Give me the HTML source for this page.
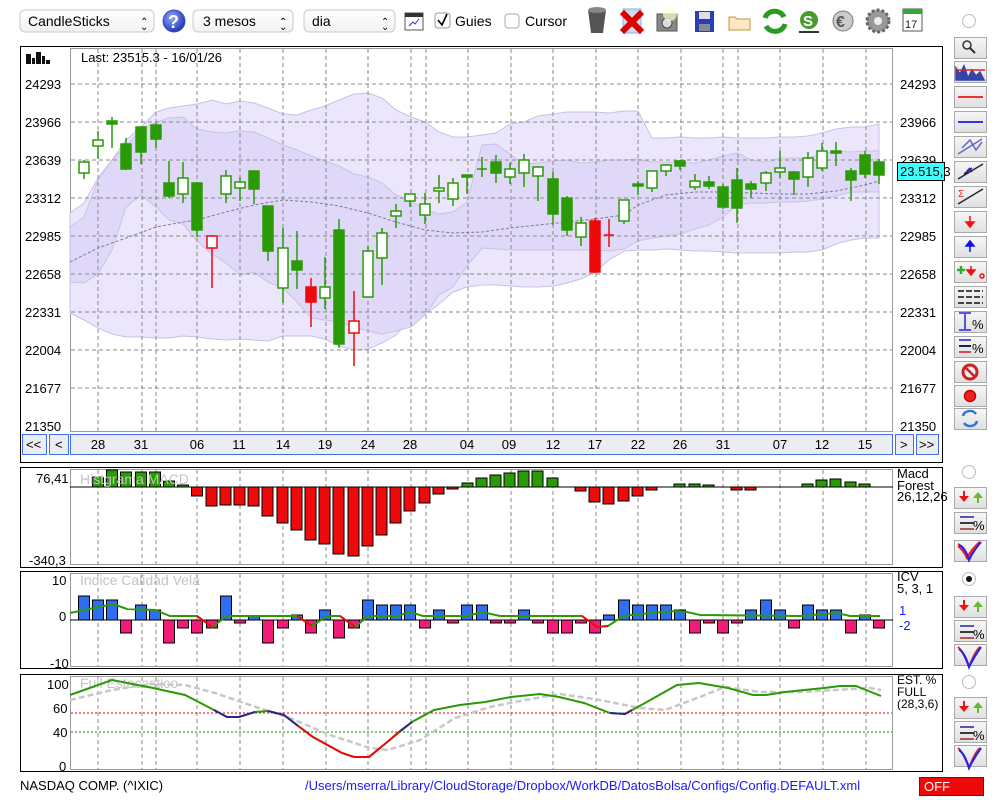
<!DOCTYPE html>
<html><head><meta charset="utf-8"><style>
body{margin:0;width:1000px;height:800px;background:#fff;overflow:hidden;font-family:"Liberation Sans",sans-serif;}
svg{position:absolute;left:0;top:0}
text{font-family:"Liberation Sans",sans-serif;}
</style></head><body>
<svg width="1000" height="800" viewBox="0 0 1000 800" xmlns="http://www.w3.org/2000/svg">
<defs>
<linearGradient id="sel" x1="0" y1="0" x2="0" y2="1"><stop offset="0" stop-color="#fff"/><stop offset="1" stop-color="#f2f2f2"/></linearGradient>
<linearGradient id="btn" x1="0" y1="0" x2="0" y2="1"><stop offset="0" stop-color="#f6f6f6"/><stop offset="1" stop-color="#e0e0e0"/></linearGradient>
<radialGradient id="help" cx="0.4" cy="0.35" r="0.7"><stop offset="0" stop-color="#8fa8ff"/><stop offset="1" stop-color="#1b2fb0"/></radialGradient>
</defs>

<!-- toolbar -->
<g font-size="14" fill="#000">
<rect x="20" y="10" width="134" height="22" rx="5" fill="url(#sel)" stroke="#c9c9c9"/>
<text x="28" y="26">CandleSticks</text>
<text x="140" y="25" font-size="10">⌃</text><text x="140" y="30" font-size="10">⌄</text>
<circle cx="174" cy="21" r="11" fill="url(#help)" stroke="#3a4fc0"/>
<text x="168" y="28" font-size="18" font-weight="bold" fill="#fff">?</text>
<rect x="193" y="10" width="100" height="22" rx="5" fill="url(#sel)" stroke="#c9c9c9"/>
<text x="203" y="26">3 mesos</text>
<text x="279" y="25" font-size="10">⌃</text><text x="279" y="30" font-size="10">⌄</text>
<rect x="304" y="10" width="91" height="22" rx="5" fill="url(#sel)" stroke="#c9c9c9"/>
<text x="312" y="26">dia</text>
<text x="381" y="25" font-size="10">⌃</text><text x="381" y="30" font-size="10">⌄</text>
<rect x="405" y="13" width="18" height="17" fill="#fff" stroke="#555"/><rect x="405" y="13" width="18" height="4" fill="#333"/>
<path d="M409 26 L413 22 L415 24 L419 19" stroke="#33c" fill="none"/>
<rect x="435" y="13" width="15" height="15" rx="3" fill="#fff" stroke="#999"/>
<path d="M438 20 L442 25 L447 14" stroke="#000" stroke-width="1.6" fill="none"/>
<text x="455" y="26">Guies</text>
<rect x="505" y="14" width="14" height="14" rx="3" fill="#fff" stroke="#aaa"/>
<text x="525" y="26">Cursor</text>
</g>
<!-- toolbar icons -->
<g>
<path d="M588 10 L606 10 L603 33 L591 33 Z" fill="#555"/><ellipse cx="597" cy="10" rx="9" ry="3" fill="#888"/>
<rect x="623" y="9" width="18" height="24" fill="#cde" stroke="#8ae"/>
<path d="M622 12 L642 32 M642 12 L622 32" stroke="#d00" stroke-width="6"/>
<rect x="657" y="14" width="20" height="17" fill="#888" stroke="#555"/><circle cx="667" cy="23" r="5" fill="#ddd" stroke="#444"/><circle cx="670" cy="14" r="7" fill="#ffffcc" opacity="0.7"/>
<rect x="695" y="11" width="19" height="21" fill="#2a3fb0"/><rect x="699" y="12" width="11" height="7" fill="#dde"/><rect x="699" y="24" width="11" height="7" fill="#889"/>
<path d="M729 17 L735 17 L737 19 L750 19 L750 30 L729 30 Z" fill="#fbe7c0" stroke="#c89040"/>
<path d="M765 18 A10 9 0 0 1 784 17 M785 24 A10 9 0 0 1 766 26" stroke="#2a9a20" stroke-width="5" fill="none"/>
<circle cx="809" cy="20" r="9" fill="#4a9a30"/><text x="803" y="26" font-size="15" font-weight="bold" fill="#fff">S</text><rect x="799" y="31" width="20" height="2" fill="#333"/>
<circle cx="843" cy="21" r="10" fill="#ccc" stroke="#777"/><text x="836" y="27" font-size="16" font-weight="bold" fill="#555">€</text>
<circle cx="878" cy="21" r="11" fill="#999" stroke="#666" stroke-width="3" stroke-dasharray="3 2"/><circle cx="878" cy="21" r="4" fill="#eee"/>
<rect x="903" y="9" width="19" height="22" fill="#fff" stroke="#555"/><rect x="903" y="9" width="19" height="5" fill="#3a3"/><text x="905" y="28" font-size="11" fill="#222">17</text>
<circle cx="969" cy="21" r="6.5" fill="#fff" stroke="#bbb"/>
</g>

<!-- MAIN PANEL -->
<rect x="20.5" y="46.5" width="922" height="416" fill="#fff" stroke="#000"/>
<g fill="#111"><rect x="26" y="54" width="5" height="10"/><rect x="32" y="58" width="3" height="6"/><rect x="36" y="52" width="5" height="12"/><rect x="42" y="56" width="3" height="8"/><rect x="46" y="60" width="4" height="4"/></g>
<text x="81" y="62" font-size="13">Last: 23515.3 - 16/01/26</text>
<rect x="70.5" y="48.5" width="822" height="383" fill="none" stroke="#999"/>
<!-- bands -->
<polygon fill="#ebe6fc" stroke="#c8c0e6" points="70,213 84,203 98,178 112,160 126,140 141,127 156,112 169,108 183,106 197,104 212,100 226,104 240,101 254,103 268,108 283,114 297,115 311,110 325,106 339,100 354,94 368,93 382,98 396,110 411,117 425,122 439,132 453,137 467,137 482,135 496,133 510,124 524,122 538,116 553,114 567,112 581,112 595,112 609,113 624,111 638,111 652,138 666,138 680,137 695,138 709,138 723,137 737,138 751,138 766,138 780,137 794,137 808,136 822,133 836,129 851,127 865,127 879,124 879,238 865,238 851,240 836,244 822,250 808,252 794,252 780,253 766,253 751,253 737,253 723,252 709,251 695,251 680,250 666,249 652,250 638,250 624,251 609,260 595,272 581,279 567,283 553,286 538,287 524,287 510,286 496,285 482,285 467,287 453,292 439,304 425,314 411,319 396,335 382,343 368,349 354,350 339,346 325,339 311,336 297,336 283,336 268,341 254,340 240,339 226,340 212,339 197,337 183,336 169,338 156,338 141,337 126,337 112,334 98,328 84,320 70,313"/>
<polygon fill="#ded6f8" stroke="#c4bce4" opacity="0.85" points="70,227 84,217 98,180 112,160 126,146 141,130 156,122 169,118 183,117 197,129 212,132 226,133 240,131 254,132 268,138 283,145 297,150 311,156 325,161 339,166 354,174 368,177 382,183 396,195 411,201 425,210 439,214 453,212 467,202 482,145 496,144 510,154 524,164 538,163 553,161 567,160 581,163 595,162 609,160 624,160 638,159 652,162 666,162 680,163 695,163 709,160 723,156 737,153 751,160 766,162 780,158 794,158 808,158 822,154 836,151 851,152 865,151 879,151 879,192 865,192 851,192 836,196 822,199 808,201 794,202 780,202 766,203 751,203 737,205 723,217 709,225 695,229 680,234 666,236 652,238 638,241 624,249 609,251 595,250 567,250 538,250 510,250 482,248 467,266 453,287 439,295 425,315 411,327 396,331 382,334 368,331 354,327 339,322 325,320 311,318 297,302 283,288 268,282 254,272 240,275 226,263 212,254 197,241 183,224 169,220 156,207 141,195 126,207 112,250 98,274 84,283 70,282"/>
<polyline fill="none" stroke="#7f7898" stroke-dasharray="3 2" points="70,262 98,248 126,238 156,227 183,222 197,220 226,212 254,205 283,200 311,202 339,206 368,213 396,222 425,230 453,233 482,232 510,228 538,225 567,222 595,219 624,215 638,205 666,195 695,192 723,192 751,193 780,194 808,194 836,191 865,185 879,181"/>
<!-- grid -->
<g stroke="#888" stroke-dasharray="4 3" stroke-width="1">
<path d="M71 84H892M71 122H892M71 160H892M71 198H892M71 236H892M71 274H892M71 312H892M71 350H892M71 388H892"/>
<path d="M98 49V431M142 49V431M156 49V431M197 49V431M240 49V431M283 49V431M326 49V431M368 49V431M411 49V431M426 49V431M468 49V431M511 49V431M553 49V431M596 49V431M638 49V431M681 49V431M723 49V431M738 49V431M780 49V431M823 49V431M866 49V431"/>
</g>
<g font-size="13" fill="#000">
<text x="25" y="89">24293</text><text x="25" y="127">23966</text><text x="25" y="165">23639</text><text x="25" y="203">23312</text><text x="25" y="241">22985</text><text x="25" y="279">22658</text><text x="25" y="317">22331</text><text x="25" y="355">22004</text><text x="25" y="393">21677</text><text x="25" y="431">21350</text>
<text x="900" y="89">24293</text><text x="900" y="127">23966</text><text x="900" y="165">23639</text><text x="900" y="203">23312</text><text x="900" y="241">22985</text><text x="900" y="279">22658</text><text x="900" y="317">22331</text><text x="900" y="355">22004</text><text x="900" y="393">21677</text><text x="900" y="431">21350</text>
</g>
<rect x="897.5" y="162.5" width="47" height="18" fill="#40ffff" stroke="#000"/>
<text x="900" y="176" font-size="13">23.515,3</text>

<!-- candles -->
<g stroke="#2a9a06" stroke-width="1.5" fill="#2a9a06">
<path d="M84 160V179M98 131V159M112 117V148M126 138V170M141 127V164M156 123V148M169 161V198M183 162V203M197 182V237M226 170V203M240 177V201M254 171V204M268 206V261M283 228V303M297 231V289M325 257V309M339 219V348M368 246V297M382 228V285M396 204V228M410 194V207M425 193V224M439 175V203M453 178V206M467 175V194M482 157V177M496 155V183M510 163V184M524 154V187M538 166V201M553 172V225M567 196V236M581 217V246M624 200V224M638 181V195M652 171V192M666 164V176M680 160V170M695 174V190M709 176V189M723 184V209M737 168V223M751 181V198M766 171V191M780 151V178M794 171V195M808 152V187M822 143V171M836 142V166M851 168V201M865 151V178M879 159V184M477 169H487"/>
<rect x="107" y="121" width="10" height="3"/><rect x="121" y="144" width="10" height="25"/><rect x="136" y="127" width="10" height="25"/><rect x="151" y="125" width="10" height="14"/><rect x="164" y="183" width="10" height="13"/><rect x="192" y="183" width="10" height="47"/><rect x="249" y="171" width="10" height="18"/><rect x="263" y="206" width="10" height="45"/><rect x="292" y="261" width="10" height="9"/><rect x="334" y="230" width="10" height="114"/><rect x="462" y="175" width="10" height="2"/><rect x="491" y="162" width="10" height="11"/><rect x="548" y="179" width="10" height="35"/><rect x="562" y="198" width="10" height="32"/><rect x="633" y="184" width="10" height="2"/><rect x="675" y="161" width="10" height="5"/><rect x="704" y="182" width="10" height="4"/><rect x="718" y="187" width="10" height="20"/><rect x="732" y="180" width="10" height="28"/><rect x="746" y="184" width="10" height="5"/><rect x="789" y="172" width="10" height="7"/><rect x="831" y="151" width="10" height="2"/><rect x="846" y="171" width="10" height="9"/><rect x="860" y="155" width="10" height="19"/><rect x="874" y="162" width="10" height="13"/>
<g fill="#fff"><rect x="79" y="162" width="10" height="11"/><rect x="93" y="140" width="10" height="6"/><rect x="178" y="178" width="10" height="16"/><rect x="221" y="176" width="10" height="18"/><rect x="235" y="182" width="10" height="6"/><rect x="278" y="248" width="10" height="40"/><rect x="320" y="287" width="10" height="11"/><rect x="363" y="251" width="10" height="46"/><rect x="377" y="233" width="10" height="25"/><rect x="391" y="211" width="10" height="5"/><rect x="405" y="194" width="10" height="7"/><rect x="420" y="204" width="10" height="11"/><rect x="434" y="188" width="10" height="3"/><rect x="448" y="183" width="10" height="16"/><rect x="505" y="169" width="10" height="8"/><rect x="519" y="160" width="10" height="13"/><rect x="533" y="167" width="10" height="9"/><rect x="576" y="223" width="10" height="14"/><rect x="619" y="200" width="10" height="21"/><rect x="647" y="171" width="10" height="17"/><rect x="661" y="165" width="10" height="6"/><rect x="690" y="181" width="10" height="6"/><rect x="761" y="173" width="10" height="10"/><rect x="775" y="168" width="10" height="4"/><rect x="803" y="158" width="10" height="19"/><rect x="817" y="151" width="10" height="17"/></g>
</g>
<g stroke="#ee0a0a" stroke-width="1.5" fill="#ee0a0a">
<path d="M212 235V288M311 278V327M354 291V366M595 218V273M609 219V247M604 235H614"/>
<rect x="306" y="287" width="10" height="15"/><rect x="590" y="221" width="10" height="51"/>
<rect x="207" y="236" width="10" height="12" fill="#fff"/><rect x="349" y="321" width="10" height="12" fill="#fff"/>
</g>

<!-- nav bar -->
<g font-size="13">
<rect x="22.5" y="434.5" width="24" height="20" fill="#ecedf2" stroke="#3f6ff0"/><text x="26" y="449">&lt;&lt;</text>
<rect x="49.5" y="434.5" width="19" height="20" fill="#ecedf2" stroke="#3f6ff0"/><text x="55" y="449">&lt;</text>
<rect x="70.5" y="434.5" width="822" height="20" fill="#ecedf2" stroke="#3f6ff0"/>
<rect x="895.5" y="434.5" width="18" height="20" fill="#ecedf2" stroke="#3f6ff0"/><text x="900" y="449">&gt;</text>
<rect x="916.5" y="434.5" width="22" height="20" fill="#ecedf2" stroke="#3f6ff0"/><text x="919" y="449">&gt;&gt;</text>
<g text-anchor="middle"><text x="98" y="449">28</text><text x="141" y="449">31</text><text x="197" y="449">06</text><text x="239" y="449">11</text><text x="283" y="449">14</text><text x="325" y="449">19</text><text x="368" y="449">24</text><text x="410" y="449">28</text><text x="467" y="449">04</text><text x="509" y="449">09</text><text x="553" y="449">12</text><text x="595" y="449">17</text><text x="638" y="449">22</text><text x="680" y="449">26</text><text x="723" y="449">31</text><text x="780" y="449">07</text><text x="822" y="449">12</text><text x="865" y="449">15</text></g>
</g>

<!-- MACD PANEL -->
<rect x="20.5" y="467.5" width="922" height="100" fill="#fff" stroke="#000"/>
<rect x="70.5" y="469.5" width="822" height="95" fill="none" stroke="#999"/>
<g stroke="#888" stroke-dasharray="4 3"><path d="M98 470V564M142 470V564M156 470V564M197 470V564M240 470V564M283 470V564M326 470V564M368 470V564M411 470V564M426 470V564M468 470V564M511 470V564M553 470V564M596 470V564M638 470V564M681 470V564M723 470V564M738 470V564M780 470V564M823 470V564M866 470V564"/></g>
<g stroke="#000" stroke-width="1">
<g fill="#2a9a06"><rect x="92.5" y="477" width="11" height="10"/><rect x="106.5" y="470" width="11" height="17"/><rect x="120.5" y="472" width="11" height="15"/><rect x="135.5" y="472" width="11" height="15"/><rect x="149.5" y="472" width="11" height="15"/><rect x="163.5" y="481" width="11" height="6"/><rect x="177.5" y="485" width="11" height="2"/><rect x="462" y="483" width="11" height="4"/><rect x="476" y="478" width="11" height="9"/><rect x="490" y="475" width="11" height="12"/><rect x="504" y="473" width="11" height="14"/><rect x="518" y="471" width="11" height="16"/><rect x="532" y="471" width="11" height="16"/><rect x="547" y="478" width="11" height="9"/><rect x="674" y="484" width="11" height="3"/><rect x="689" y="484" width="11" height="3"/><rect x="703" y="485" width="11" height="2"/><rect x="802" y="484" width="11" height="3"/><rect x="816" y="480" width="11" height="7"/><rect x="830" y="479" width="11" height="8"/><rect x="845" y="482" width="11" height="5"/><rect x="859" y="484" width="11" height="3"/></g>
<g fill="#ee0a0a"><rect x="191.5" y="487" width="11" height="9"/><rect x="206" y="487" width="11" height="19"/><rect x="220" y="487" width="11" height="18"/><rect x="234" y="487" width="11" height="18"/><rect x="248" y="487" width="11" height="19"/><rect x="262" y="487" width="11" height="29"/><rect x="277" y="487" width="11" height="36"/><rect x="291" y="487" width="11" height="43"/><rect x="305" y="487" width="11" height="53"/><rect x="319" y="487" width="11" height="57"/><rect x="333" y="487" width="11" height="67"/><rect x="348" y="487" width="11" height="69"/><rect x="362" y="487" width="11" height="59"/><rect x="376" y="487" width="11" height="48"/><rect x="390" y="487" width="11" height="36"/><rect x="404" y="487" width="11" height="24"/><rect x="419" y="487" width="11" height="16"/><rect x="433" y="487" width="11" height="7"/><rect x="447" y="487" width="11" height="2"/><rect x="575" y="487" width="11" height="4"/><rect x="589" y="487" width="11" height="15"/><rect x="603" y="487" width="11" height="17"/><rect x="618" y="487" width="11" height="14"/><rect x="632" y="487" width="11" height="9"/><rect x="646" y="487" width="11" height="3"/><rect x="731" y="487" width="11" height="3"/><rect x="745" y="487" width="11" height="3"/></g>
</g>
<path d="M70 487H893" stroke="#000"/>
<text x="80" y="484" font-size="14" fill="#c4c4c4">Histgrama MACD</text>
<g font-size="13"><text x="36" y="483">76,41</text><text x="29" y="565">-340,3</text>
<text x="897" y="478">Macd</text><text x="897" y="490">Forest</text><text x="897" y="501">26,12,26</text></g>

<!-- ICV PANEL -->
<rect x="20.5" y="571.5" width="922" height="97" fill="#fff" stroke="#000"/>
<rect x="70.5" y="573.5" width="822" height="93" fill="none" stroke="#999"/>
<g stroke="#888" stroke-dasharray="4 3"><path d="M98 574V666M142 574V666M156 574V666M197 574V666M240 574V666M283 574V666M326 574V666M368 574V666M411 574V666M426 574V666M468 574V666M511 574V666M553 574V666M596 574V666M638 574V666M681 574V666M723 574V666M738 574V666M780 574V666M823 574V666M866 574V666"/></g>
<g stroke="#000">
<g fill="#2f6ef0"><rect x="78.5" y="596" width="11" height="24"/><rect x="92.5" y="600" width="11" height="20"/><rect x="106.5" y="600" width="11" height="20"/><rect x="135.5" y="605" width="11" height="15"/><rect x="149.5" y="610" width="11" height="10"/><rect x="220.5" y="596" width="11" height="24"/><rect x="248.5" y="616" width="11" height="4"/><rect x="291.5" y="615" width="11" height="5"/><rect x="319.5" y="610" width="11" height="10"/><rect x="362.5" y="600" width="11" height="20"/><rect x="376.5" y="605" width="11" height="15"/><rect x="390.5" y="605" width="11" height="15"/><rect x="404.5" y="605" width="11" height="15"/><rect x="433.5" y="610" width="11" height="10"/><rect x="461.5" y="605" width="11" height="15"/><rect x="476.5" y="605" width="11" height="15"/><rect x="518.5" y="610" width="11" height="10"/><rect x="603.5" y="615" width="11" height="5"/><rect x="618.5" y="600" width="11" height="20"/><rect x="632.5" y="605" width="11" height="15"/><rect x="646.5" y="605" width="11" height="15"/><rect x="660.5" y="605" width="11" height="15"/><rect x="674.5" y="610" width="11" height="10"/><rect x="745.5" y="610" width="11" height="10"/><rect x="760.5" y="600" width="11" height="20"/><rect x="774.5" y="610" width="11" height="10"/><rect x="802.5" y="605" width="11" height="15"/><rect x="816.5" y="610" width="11" height="10"/><rect x="830.5" y="610" width="11" height="10"/><rect x="859.5" y="615" width="11" height="5"/></g>
<g fill="#f01c78"><rect x="120.5" y="620" width="11" height="13"/><rect x="163.5" y="620" width="11" height="23"/><rect x="177.5" y="620" width="11" height="8"/><rect x="191.5" y="620" width="11" height="13"/><rect x="206.5" y="620" width="11" height="8"/><rect x="234.5" y="620" width="11" height="3"/><rect x="262.5" y="620" width="11" height="23"/><rect x="277.5" y="620" width="11" height="8"/><rect x="305.5" y="620" width="11" height="13"/><rect x="333.5" y="620" width="11" height="18"/><rect x="348.5" y="620" width="11" height="8"/><rect x="419.5" y="620" width="11" height="8"/><rect x="447.5" y="620" width="11" height="3"/><rect x="490.5" y="620" width="11" height="3"/><rect x="504.5" y="620" width="11" height="3"/><rect x="532.5" y="620" width="11" height="3"/><rect x="547.5" y="620" width="11" height="13"/><rect x="561.5" y="620" width="11" height="13"/><rect x="575.5" y="620" width="11" height="3"/><rect x="589.5" y="620" width="11" height="13"/><rect x="689.5" y="620" width="11" height="13"/><rect x="703.5" y="620" width="11" height="3"/><rect x="717.5" y="620" width="11" height="13"/><rect x="731.5" y="620" width="11" height="3"/><rect x="788.5" y="620" width="11" height="8"/><rect x="845.5" y="620" width="11" height="13"/><rect x="873.5" y="620" width="11" height="8"/></g>
</g>
<path d="M70 620H893" stroke="#000"/>
<polyline fill="none" stroke="#2a9a06" stroke-width="2" points="70,613 113,604 127,609 155,610 170,616 197,616 212,627 227,616 297,616 312,626 327,616 340,616 355,627 368,616 397,616 410,612 423,616 467,616 482,612 500,616 582,616 597,627 608,626 623,616 650,613 677,611 687,612 700,615 800,616 837,613 850,616 880,616"/>
<g stroke="#ee0a0a" stroke-width="2" fill="none"><path d="M197 616L212 627M297 616L312 626M340 616L355 627M582 616L597 627L608 626"/></g>
<text x="80" y="585" font-size="14" fill="#c4c4c4">Indice Calidad Vela</text>
<g font-size="13"><text x="52" y="585">10</text><text x="59" y="621">0</text><text x="50" y="668">-10</text>
<text x="897" y="581">ICV</text><text x="897" y="593">5, 3, 1</text>
<text x="899" y="615" fill="#1a1aff">1</text><text x="899" y="630" fill="#1a1aff">-2</text></g>

<!-- STOCH PANEL -->
<rect x="20.5" y="674.5" width="922" height="97" fill="#fff" stroke="#000"/>
<rect x="70.5" y="676.5" width="822" height="93" fill="none" stroke="#999"/>
<g stroke="#888" stroke-dasharray="4 3"><path d="M98 677V769M142 677V769M156 677V769M197 677V769M240 677V769M283 677V769M326 677V769M368 677V769M411 677V769M426 677V769M468 677V769M511 677V769M553 677V769M596 677V769M638 677V769M681 677V769M723 677V769M738 677V769M780 677V769M823 677V769M866 677V769"/></g>
<path d="M71 713H892" stroke="#d00" stroke-dasharray="2 2"/>
<path d="M71 732H892" stroke="#080" stroke-dasharray="2 2"/>
<text x="80" y="688" font-size="14" fill="#c4c4c4">Full Estocastico</text>
<polyline fill="none" stroke="#c8c8c8" stroke-width="2.5" stroke-dasharray="6 3" points="70,700 112,690 150,684 185,685 215,693 250,705 290,718 330,735 370,748 388,750 420,740 455,718 490,707 525,700 560,694 600,700 640,708 665,710 700,697 725,687 760,692 800,692 835,690 870,688 881,690"/>
<polyline fill="none" stroke="#2a9a06" stroke-width="2" points="70,695 112,680 153,688 185,695 214,710 227,717 239,717 255,712 268,711 284,715 313,737 342,753 354,757 369,757 386,743 412,722 434,710 460,705 485,702 511,697 540,694 559,697 584,703 610,713 625,714 645,703 677,685 699,683 728,688 753,695 766,695 785,692 824,688 840,686 856,686 881,696"/>
<g fill="none" stroke-width="2"><polyline stroke="#332288" points="214,710 227,717 239,717 255,712"/><polyline stroke="#332288" points="268,711 284,715 298,726"/><polyline stroke="#ee0a0a" points="298,726 313,737 342,753 354,757 369,757 386,743 400,731"/><polyline stroke="#332288" points="400,731 412,722"/><polyline stroke="#332288" points="610,713 625,714 632,710"/></g>
<g font-size="13"><text x="47" y="689">100</text><text x="53" y="713">60</text><text x="53" y="737">40</text><text x="59" y="771">0</text>
<text x="897" y="684" font-size="12">EST. %</text><text x="897" y="696" font-size="12">FULL</text><text x="897" y="708" font-size="12">(28,3,6)</text></g>

<!-- footer -->
<text x="20" y="790" font-size="13">NASDAQ COMP. (^IXIC)</text>
<text x="305" y="790" font-size="13" fill="#1a1aff">/Users/mserra/Library/CloudStorage/Dropbox/WorkDB/DatosBolsa/Configs/Config.DEFAULT.xml</text>
<rect x="919.5" y="777.5" width="64" height="18" fill="#ee0a0a" stroke="#900"/>
<text x="924" y="791" font-size="13" fill="#fff">OFF</text>

<!-- right sidebar -->
<g stroke="#aaa" fill="url(#btn)">
<rect x="954.5" y="37.5" width="32" height="21"/><rect x="954.5" y="61.5" width="32" height="21"/><rect x="954.5" y="86.5" width="32" height="21"/><rect x="954.5" y="111.5" width="32" height="21"/><rect x="954.5" y="136.5" width="32" height="21"/><rect x="954.5" y="161.5" width="32" height="21"/><rect x="954.5" y="186.5" width="32" height="21"/><rect x="954.5" y="211.5" width="32" height="21"/><rect x="954.5" y="236.5" width="32" height="21"/><rect x="954.5" y="261.5" width="32" height="21"/><rect x="954.5" y="286.5" width="32" height="21"/><rect x="954.5" y="311.5" width="32" height="21"/><rect x="954.5" y="336.5" width="32" height="21"/><rect x="954.5" y="361.5" width="32" height="21"/><rect x="954.5" y="385.5" width="32" height="21"/><rect x="954.5" y="408.5" width="32" height="21"/>
<rect x="954.5" y="487.5" width="32" height="21"/><rect x="954.5" y="512.5" width="32" height="21"/><rect x="954.5" y="540.5" width="32" height="21"/>
<rect x="954.5" y="596.5" width="32" height="21"/><rect x="954.5" y="620.5" width="32" height="21"/><rect x="954.5" y="644.5" width="32" height="21"/>
<rect x="954.5" y="697.5" width="32" height="21"/><rect x="954.5" y="721.5" width="32" height="21"/><rect x="954.5" y="745.5" width="32" height="21"/>
</g>
<g fill="none" stroke-width="1.5">
<circle cx="967" cy="45" r="4" stroke="#333"/><path d="M970 48L975 53" stroke="#333" stroke-width="2"/>
<path d="M956 80L956 68L960 74L964 66L968 78L972 70L976 76L980 72L984 80Z" fill="#3344aa" stroke="#3344aa"/><path d="M956 70H985" stroke="#d22"/>
<path d="M958 97H983" stroke="#e33" stroke-width="2"/>
<path d="M958 122H983" stroke="#33e" stroke-width="2"/>
<path d="M958 154L982 139M962 148L970 140L976 150L982 142" stroke="#66c"/>
<path d="M958 179L983 164M964 174L972 168" stroke="#224"/><path d="M970 168l-3 3m5 1l-3 -4" stroke="#22d"/>
<path d="M958 204L983 189" stroke="#224"/><text x="958" y="197" font-size="10" fill="#e22" stroke="none">Σ</text>
<path d="M970 216v6M966 222h8l-4 5z" stroke="#e11" fill="#e11"/>
<path d="M970 252v-6M966 246h8l-4 -5z" stroke="#11e" fill="#11e"/>
<path d="M961 266v8M957 270h8" stroke="#3a3" stroke-width="2.5"/><path d="M971 266v4M967 270h8l-4 5z" stroke="#e11" fill="#e11"/><circle cx="982" cy="276" r="2" stroke="#e11"/>
<path d="M958 291h25M958 297h25M958 303h25" stroke="#444" stroke-width="2" stroke-dasharray="6 2"/>
<path d="M959 313h12M959 330h12M965 314v15" stroke="#22d"/><text x="972" y="329" font-size="13" fill="#000" stroke="none">%</text>
<path d="M959 340h12M959 346h12M959 352h12" stroke="#22d"/><path d="M959 352h12" stroke="#e33"/><path d="M959 346h12" stroke="#000"/><text x="972" y="353" font-size="13" fill="#000" stroke="none">%</text>
<circle cx="970" cy="372" r="7" stroke="#c22" stroke-width="3" fill="#eee"/><path d="M965 367l10 10" stroke="#c22" stroke-width="2.5"/>
<circle cx="970" cy="396" r="5.5" fill="#e22" stroke="#c00"/>
<path d="M963 416a7 6 0 0 1 13 -2M977 421a7 6 0 0 1 -13 2" stroke="#3070e0" stroke-width="2.5"/>
</g>
<!-- indicator side controls -->
<g>
<circle cx="969" cy="472" r="6.5" fill="#fff" stroke="#bbb"/>
<circle cx="969" cy="579" r="6.5" fill="#fff" stroke="#bbb"/><circle cx="969" cy="579" r="3" fill="#111"/>
<circle cx="969" cy="682" r="6.5" fill="#fff" stroke="#bbb"/>
</g>
<g id="ctl">
<path d="M963 491v5h-4l5 6 5-6h-4v-5z" fill="#e11"/><path d="M977 503v-5h-4l5-6 5 6h-4v5z" fill="#6b3"/>
<path d="M960 517h14M960 523h14M960 529h14" stroke="#000" stroke-width="1.5"/><path d="M960 517h14" stroke="#33e"/><path d="M960 529h14" stroke="#e44"/><text x="973" y="530" font-size="13">%</text>
<path d="M958 544q5 2 11 16q6 -16 11 -18M958 546q5 4 9 12q5 -10 13 -16" stroke-width="2" fill="none" stroke="#e22"/><path d="M959 545q6 2 10 15q5 -10 12 -18" stroke="#22e" stroke-width="2" fill="none"/>
</g>
<g transform="translate(0,109)"><path d="M963 491v5h-4l5 6 5-6h-4v-5z" fill="#e11"/><path d="M977 503v-5h-4l5-6 5 6h-4v5z" fill="#6b3"/>
<path d="M960 517h14M960 523h14M960 529h14" stroke="#000" stroke-width="1.5"/><path d="M960 517h14" stroke="#33e"/><path d="M960 529h14" stroke="#e44"/><text x="973" y="530" font-size="13">%</text>
<path d="M958 538q5 4 11 20q6 -16 11 -20" stroke-width="2" fill="none" stroke="#e22"/><path d="M959 540q6 4 10 18q5 -10 12 -20" stroke="#22e" stroke-width="2" fill="none"/></g>
<g transform="translate(0,210)"><path d="M963 491v5h-4l5 6 5-6h-4v-5z" fill="#e11"/><path d="M977 503v-5h-4l5-6 5 6h-4v5z" fill="#6b3"/>
<path d="M960 517h14M960 523h14M960 529h14" stroke="#000" stroke-width="1.5"/><path d="M960 517h14" stroke="#33e"/><path d="M960 529h14" stroke="#e44"/><text x="973" y="530" font-size="13">%</text>
<path d="M958 538q5 4 11 20q6 -16 11 -20" stroke-width="2" fill="none" stroke="#e22"/><path d="M959 540q6 4 10 18q5 -10 12 -20" stroke="#22e" stroke-width="2" fill="none"/></g>
</svg>
</body></html>
